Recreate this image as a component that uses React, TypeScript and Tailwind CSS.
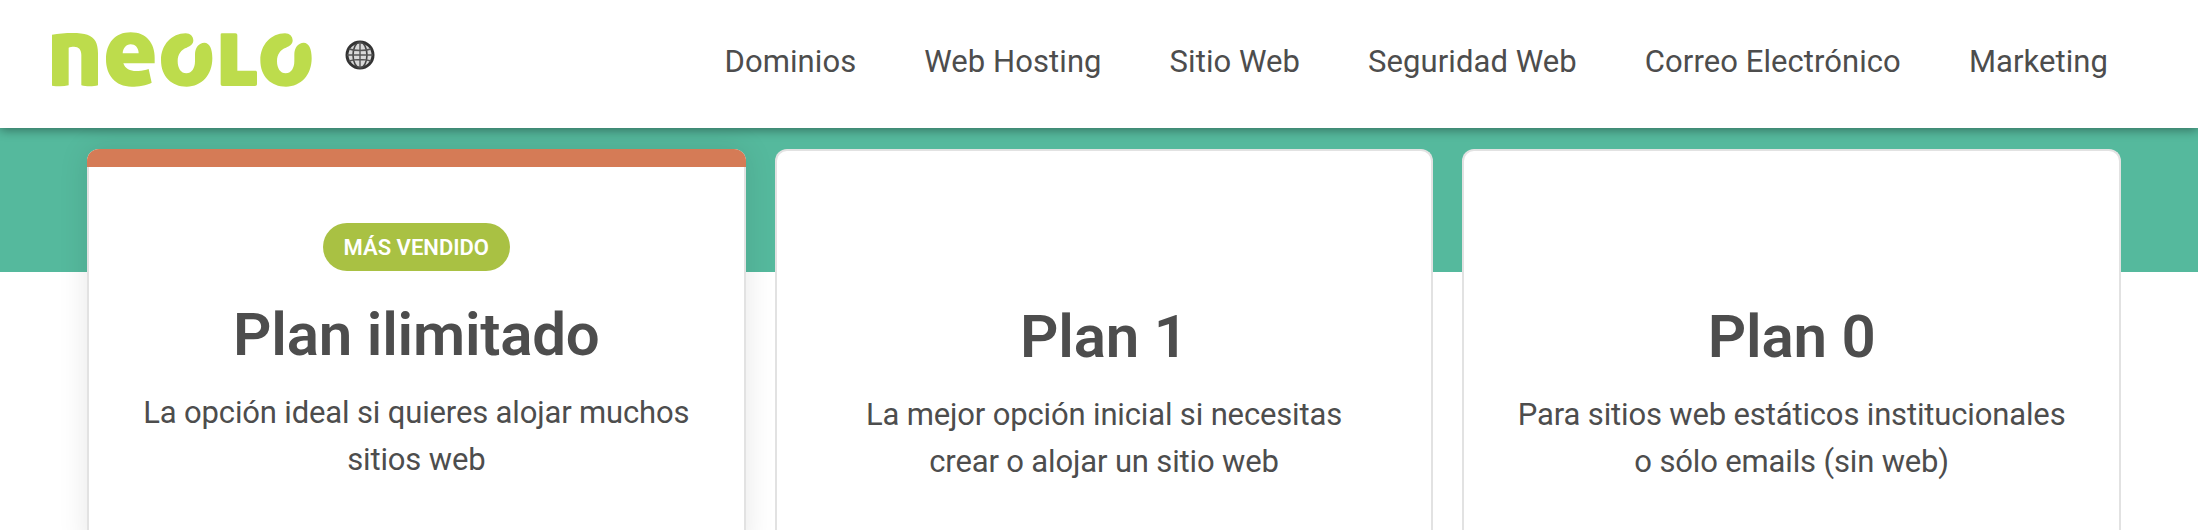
import React from 'react';

const navItems = ['Dominios', 'Web Hosting', 'Sitio Web', 'Seguridad Web', 'Correo Electrónico', 'Marketing'];

const oPath =
  'M92 25C106 25 115 35 115 46C115 58 105 64 95 68C78 74 68 88 68 108C68 130 78 145 94 145C110 145 120 130 120 108L120 88C120 68 132 53 148 53C164 53 172 72 172 100C172 150 140 185 95 185C50 185 18 155 18 105C18 60 50 25 92 25Z';

const Logo: React.FC = () => (
  <svg width="260" height="56" viewBox="156 96 780 168" fill="#bddc4c" className="shrink-0">
    {/* n */}
    <path d="M156 104C190 98 240 96 262 104C285 112 294 130 294 160L294 256C280 260 258 260 244 256L244 165C244 148 236 140 222 140C216 140 210 141 206 143L206 256C190 260 170 259 156 257Z" />
    {/* e */}
    <path
      fillRule="evenodd"
      d="M464 190L370 190C375 208 395 215 415 213C427 212 437 210 446 207L455 248C440 256 415 260 395 260C345 260 318 225 318 178C318 130 345 97 392 97C440 97 464 130 464 175ZM368 160L416 160C416 143 405 133 392 133C378 133 369 145 368 160Z"
    />
    {/* o */}
    <path transform="translate(465 75)" d={oPath} />
    {/* l */}
    <path d="M662 104C662 100 664 100 668 100L706 100C710 100 712 102 712 106L712 212L766 212C769 212 771 214 771 217L771 252C771 256 769 258 765 258L668 258C664 258 662 256 662 252Z" />
    {/* o */}
    <path transform="translate(763 75)" d={oPath} />
  </svg>
);

const Globe: React.FC = () => (
  <svg width="32" height="32" viewBox="0 0 32 32" fill="none" className="shrink-0 blur-[0.7px]">
    <circle cx="16" cy="16" r="13" fill="#d8d8d8" stroke="#333333" strokeWidth="3" />
    <ellipse cx="16" cy="16" rx="7" ry="13" stroke="#444444" strokeWidth="1.6" />
    <path d="M16 3V29M3 16H29M5 10C11 12 21 12 27 10M5 22C11 20 21 20 27 22" stroke="#555555" strokeWidth="1.4" />
  </svg>
);

interface Plan {
  name: string;
  lines: string[];
  featured?: boolean;
}

const plans: Plan[] = [
  { name: 'Plan ilimitado', lines: ['La opción ideal si quieres alojar muchos', 'sitios web'], featured: true },
  { name: 'Plan 1', lines: ['La mejor opción inicial si necesitas', 'crear o alojar un sitio web'] },
  { name: 'Plan 0', lines: ['Para sitios web estáticos institucionales', 'o sólo emails (sin web)'] },
];

const PlanCard: React.FC<{ plan: Plan }> = ({ plan }) => (
  <div
    className={
      plan.featured
        ? 'h-[400px] rounded-t-[12px] bg-white shadow-[0_0_30px_rgba(0,0,0,0.1)] overflow-hidden text-center'
        : 'h-[400px] rounded-t-[12px] bg-white border-x-2 border-t-2 border-[#e2e2e2] overflow-hidden text-center'
    }
  >
    {plan.featured && <div className="h-[18px] bg-[#d57b56]" />}
    <div className={plan.featured ? 'h-full pt-[56px] border-x-2 border-[#e2e2e2]' : 'pt-[72px]'}>
      <div className="h-[48px] flex justify-center">
        {plan.featured && (
          <span className="w-[187px] h-[48px] rounded-full bg-[#a9c143] text-white text-[22px] font-semibold leading-[50px]">
            MÁS VENDIDO
          </span>
        )}
      </div>
      <h2 className={plan.featured ? 'mt-[19px] text-[60px] leading-[90px] font-semibold text-[#4d4d4d] tracking-[-0.2px]' : 'mt-[21px] text-[60px] leading-[90px] font-semibold text-[#4d4d4d] tracking-[-0.2px]'}>
        {plan.name}
      </h2>
      <div className="mt-[9px] text-[31px] leading-[47px] text-[#4d4d4d] tracking-[-0.15px]">
        {plan.lines.map((line) => (
          <p key={line}>{line}</p>
        ))}
      </div>
    </div>
  </div>
);

export default function App() {
  return (
    <div className="h-[530px] overflow-hidden bg-white font-['Roboto',sans-serif]">
      <header className="relative z-10 h-[128px] bg-white shadow-[0_2px_10px_rgba(0,0,0,0.4)] flex items-start pl-[52px] pr-[90px]">
        <div className="mt-[32px]">
          <Logo />
        </div>
        <div className="ml-[32px] mt-[39px]">
          <Globe />
        </div>
        <nav className="ml-auto mt-[39px] flex gap-[68px] text-[31px] leading-[46px] text-[#4d4d4d] tracking-[0.07px]">
          {navItems.map((item) => (
            <a key={item} className="whitespace-nowrap">
              {item}
            </a>
          ))}
        </nav>
      </header>

      <div className="h-[144px] bg-[#55b99d]" />

      {/* tarjetas de planes */}
      <div className="relative -mt-[123px] ml-[87px] w-[2034px] grid grid-cols-3 gap-[29px]">
        {plans.map((plan) => (
          <PlanCard key={plan.name} plan={plan} />
        ))}
      </div>
    </div>
  );
}
